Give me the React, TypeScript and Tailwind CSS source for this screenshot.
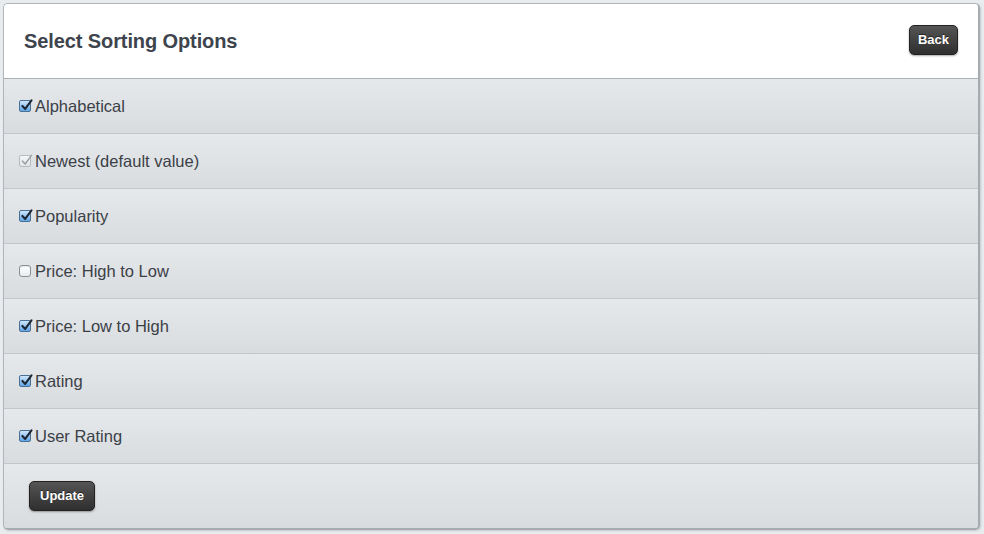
import React from 'react';

type Opt = { label: string; state: 'on' | 'off' | 'locked' };

const options: Opt[] = [
  { label: 'Alphabetical', state: 'on' },
  { label: 'Newest (default value)', state: 'locked' },
  { label: 'Popularity', state: 'on' },
  { label: 'Price: High to Low', state: 'off' },
  { label: 'Price: Low to High', state: 'on' },
  { label: 'Rating', state: 'on' },
  { label: 'User Rating', state: 'on' },
];

const Check: React.FC<{ state: Opt['state'] }> = ({ state }) => {
  if (state === 'off') {
    return (
      <span className="inline-block w-[12px] h-[12px] rounded-[3px] border border-[#8a8f94] bg-gradient-to-b from-white to-[#e9ecef] shadow-[inset_0_1px_1px_rgba(0,0,0,0.1)]" />
    );
  }
  const locked = state === 'locked';
  return (
    <span
      className={
        locked
          ? 'relative inline-block w-[12px] h-[12px] rounded-[2px] border border-[#b9bcbf] bg-gradient-to-b from-[#f6f6f6] to-[#e2e4e6]'
          : 'relative inline-block w-[12px] h-[12px] rounded-[2px] border border-[#4a6f95] bg-gradient-to-b from-[#cfe6fb] to-[#5fa5e6]'
      }
    >
      <svg viewBox="0 0 12 12" className="absolute -top-[2px] left-[0px] w-[13px] h-[13px]">
        <path
          d="M2.2 6.4 L4.8 9.2 L10.6 1.2"
          fill="none"
          stroke={locked ? '#9a9da0' : '#1d2733'}
          strokeWidth={locked ? 1.3 : 1.9}
          strokeLinecap="round"
          strokeLinejoin="round"
        />
      </svg>
    </span>
  );
};

const DarkButton: React.FC<{ children: React.ReactNode; wide?: boolean }> = ({ children, wide }) => (
  <button
    className={
      (wide ? 'px-[10px] ' : 'px-[8px] ') +
      'h-[30px] rounded-[5px] bg-gradient-to-b from-[#555555] to-[#2f2f2f] border border-[#222] text-white text-[13px] font-bold shadow-[0_1px_2px_rgba(0,0,0,0.35)] [text-shadow:0_-1px_0_rgba(0,0,0,0.5)]'
    }
  >
    {children}
  </button>
);

export default function App() {
  return (
    <div className="w-[984px] h-[534px] bg-[#e9ecef] pt-[3px] pl-[3px] pr-[4px] font-['Liberation_Sans',Arial,sans-serif]">
      <div className="w-[977px] rounded-[5px] border border-[#b0b5ba] border-r-2 border-r-[#a6abb0] border-b-2 border-b-[#a6abb0] overflow-hidden shadow-[1px_1px_2px_rgba(0,0,0,0.15)]">
        <div className="h-[75px] bg-white flex items-center justify-between pl-[20px] pr-[20px] pb-[3px] border-b border-[#a9afb5]">
          <h1 className="text-[20px] font-bold text-[#3d444d] tracking-[-0.1px] mt-[3px]">Select Sorting Options</h1>
          <DarkButton>Back</DarkButton>
        </div>
        {options.map((o) => (
          <div
            key={o.label}
            className="h-[55px] flex items-center pl-[15px] border-b border-[#c3c7cb] bg-gradient-to-b from-[#e6e9ec] to-[#d9dcdf]"
          >
            <Check state={o.state} />
            <span className="ml-[4px] text-[16.5px] text-[#3b4047] mt-[1px]">{o.label}</span>
          </div>
        ))}
        <div className="h-[64px] flex items-center pl-[25px] bg-gradient-to-b from-[#e6e9ec] to-[#d9dcdf]">
          <DarkButton wide>Update</DarkButton>
        </div>
      </div>
    </div>
  );
}
